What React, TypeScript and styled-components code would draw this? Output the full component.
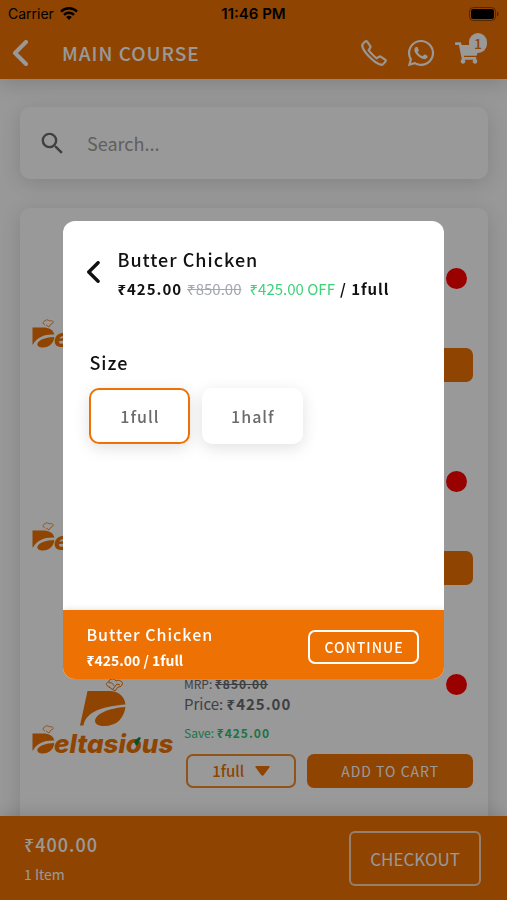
import React from "react";
import styled, { createGlobalStyle, css } from "styled-components";
import { FaShoppingCart, FaWhatsapp } from "react-icons/fa";
import { SlPhone } from "react-icons/sl";
import { MdSearch } from "react-icons/md";

const orange = "#ee7203";
const sans = '"Noto Sans CJK SC", "Noto Sans", sans-serif';

const GlobalStyle = createGlobalStyle`
  *, *::before, *::after { box-sizing: border-box; }
  body { margin: 0; font-family: ${sans}; color: #6b6b70; background: #fff; }
  button, input, select { font: inherit; color: inherit; }
  button { cursor: pointer; padding: 0; border: 0; background: none; }
  h1, h2, h3, p { margin: 0; font-weight: 500; }
`;

const Screen = styled.div`
  height: 100vh;
  display: flex;
  flex-direction: column;
  overflow: hidden;
  background: #fdfdfd;
`;

const TopBar = styled.header`
  flex: none;
  background: ${orange};
  box-shadow: 0 4px 20px rgba(0, 0, 0, 0.16);
  z-index: 1;
`;

const StatusBar = styled.div`
  display: grid;
  grid-template-columns: 1fr auto 1fr;
  align-items: center;
  height: 27px;
  padding: 0 8px;
  font: 400 14px/20px Inter, sans-serif;
  color: #000;
`;

const Carrier = styled.span`
  display: flex;
  align-items: center;
  gap: 6px;
`;

const Clock = styled.time`
  font-size: 15px;
  font-weight: 600;
`;

const BatterySlot = styled.span`
  display: flex;
  justify-content: flex-end;
`;

const NavBar = styled.nav`
  display: flex;
  align-items: center;
  height: 52px;
  padding: 0 20px 0 12px;
  color: #fff;
`;

const IconButton = styled.button`
  position: relative;
  display: flex;
  color: inherit;
`;

const NavTitle = styled.h1`
  flex: 1;
  margin-left: 34px;
  font-size: 19px;
  line-height: 28px;
  letter-spacing: 1px;
`;

const NavActions = styled.div`
  display: flex;
  align-items: center;
  gap: 19px;
`;

const PhoneIcon = styled(SlPhone)`
  stroke: currentColor;
  stroke-width: 28px;
`;

const CartButton = styled(IconButton)`
  padding-right: 8px;
`;

const CartBadge = styled.span`
  position: absolute;
  top: -8px;
  right: 0;
  width: 18px;
  height: 20px;
  border-radius: 9px;
  background: #fff;
  color: ${orange};
  font-size: 14px;
  font-weight: 500;
  line-height: 20px;
  text-align: center;
`;

const Content = styled.main`
  flex: 1;
  min-height: 0;
  overflow: hidden;
  display: flex;
  flex-direction: column;
  gap: 29px;
  padding: 28px 19px 0 20px;
`;

const panel = css`
  background: #fff;
  border-radius: 10px;
  box-shadow: 0 4px 20px rgba(0, 0, 0, 0.14);
`;

const SearchBox = styled.label`
  ${panel}
  flex: none;
  display: flex;
  align-items: center;
  gap: 20px;
  height: 72px;
  padding: 0 18px;
`;

const SearchInput = styled.input`
  flex: 1;
  min-width: 0;
  border: 0;
  padding: 0;
  outline: 0;
  background: none;
  font-size: 18px;
  line-height: 28px;
  &::placeholder {
    color: #a0a0a0;
    opacity: 1;
  }
`;

const ItemList = styled.ul`
  ${panel}
  flex: none;
  margin: 0;
  padding: 0 15px 40px 12px;
  list-style: none;
`;

const Item = styled.li`
  display: flex;
  align-items: flex-start;
  gap: 12px;
  padding: 60px 0 29px;
`;

const ItemInfo = styled.div`
  flex: 1;
  min-width: 0;
`;

const MrpRow = styled.div`
  display: flex;
  align-items: center;
  justify-content: space-between;
  height: 20px;
  padding-right: 6px;
  font-size: 12px;
  line-height: 20px;
`;

const Dot = styled.span`
  flex: none;
  width: 21px;
  height: 21px;
  border-radius: 50%;
  background: #ff0000;
`;

const Amount = styled.b<{ $struck?: boolean }>`
  font-weight: 700;
  text-decoration: ${(p) => (p.$struck ? "line-through" : "none")};
  letter-spacing: 1px;
`;

const PriceRow = styled.p`
  font-size: 15px;
  line-height: 20px;
  font-weight: 400;
`;

const SaveRow = styled.p`
  margin-top: 9px;
  font-size: 12px;
  line-height: 20px;
  font-weight: 400;
  color: #32c077;
`;

const ItemActions = styled.div`
  display: grid;
  grid-template-columns: 2fr 3fr;
  gap: 11px;
  margin-top: 11px;
  padding-left: 2px;
`;

const SizePicker = styled.label`
  display: flex;
  align-items: center;
  justify-content: center;
  gap: 6px;
  height: 34px;
  border: 2px solid #f08a2c;
  border-radius: 7px;
  color: ${orange};
`;

const SizeSelect = styled.select`
  appearance: none;
  border: 0;
  padding: 0;
  background: none;
  font-size: 15px;
  line-height: 24px;
  font-weight: 500;
`;

const AddButton = styled.button`
  height: 34px;
  border-radius: 7px;
  background: ${orange};
  color: #fff;
  font-size: 14px;
  line-height: 24px;
  letter-spacing: 1px;
`;

const CartFooter = styled.footer`
  flex: none;
  display: flex;
  align-items: center;
  justify-content: space-between;
  height: 84px;
  padding: 0 26px 0 24px;
  background: ${orange};
  box-shadow: 0 -2px 16px rgba(0, 0, 0, 0.14);
  color: #fff;
  z-index: 1;
`;

const CartTotal = styled.p`
  font-size: 18px;
  line-height: 28px;
  letter-spacing: 1px;
`;

const CartCount = styled.p`
  margin-top: 4px;
  font-size: 14px;
  line-height: 24px;
  font-weight: 400;
`;

const OutlineButton = styled.button<{ $large?: boolean }>`
  color: #fff;
  border: 2px solid ${(p) => (p.$large ? "#fad5b3" : "#fff")};
  border-radius: ${(p) => (p.$large ? "6px" : "7px")};
  height: ${(p) => (p.$large ? "55px" : "34px")};
  padding: ${(p) => (p.$large ? "0 19px" : "0 13px 0 14px")};
  font-size: ${(p) => (p.$large ? "17px" : "14px")};
  font-weight: ${(p) => (p.$large ? 400 : 500)};
  letter-spacing: ${(p) => (p.$large ? "0" : "1px")};
`;

const Overlay = styled.div`
  position: fixed;
  inset: 0;
  z-index: 2;
  display: grid;
  place-items: center;
  background: rgba(0, 0, 0, 0.4);
`;

const Dialog = styled.section`
  display: flex;
  flex-direction: column;
  width: 75%;
  min-height: 458px;
  overflow: hidden;
  border-radius: 12px;
  background: #fff;
  color: #111;
`;

const DialogHeader = styled.header`
  display: flex;
  align-items: center;
  gap: 17px;
  padding: 23px 23px 0;
`;

const BackButton = styled(IconButton)`
  padding-bottom: 5px;
`;

const DialogTitle = styled.h2`
  font-size: 18px;
  line-height: 30px;
  letter-spacing: 1px;
`;

const DialogPrice = styled.p`
  display: flex;
  gap: 5px;
  font-size: 15px;
  line-height: 30px;
`;

const CurrentPrice = styled.span`
  font-weight: 700;
  letter-spacing: 1px;
`;

const OldPrice = styled.s`
  color: #a3a7b0;
  font-weight: 400;
`;

const Discount = styled.span`
  margin-left: 3px;
  color: #3dd27a;
  font-weight: 400;
`;

const SizeGroup = styled.fieldset`
  flex: 1;
  min-width: 0;
  margin: 43px 0 0;
  padding: 0 26px;
  border: 0;
`;

const SizeLegend = styled.legend`
  padding: 0;
  font-size: 18px;
  line-height: 30px;
  font-weight: 500;
  letter-spacing: 1px;
`;

const SizeOptions = styled.div`
  display: flex;
  gap: 12px;
  margin-top: 11px;
`;

const SizeOption = styled.label`
  position: relative;
  display: flex;
  align-items: center;
  justify-content: center;
  width: 101px;
  height: 56px;
  border: 2px solid #fff;
  border-radius: 10px;
  background: #fff;
  box-shadow: 0 4px 16px rgba(0, 0, 0, 0.12);
  color: #6b6b6b;
  font-size: 16px;
  font-weight: 500;
  letter-spacing: 1px;
  cursor: pointer;
  &:has(input:checked) {
    border-color: ${orange};
  }
`;

const HiddenRadio = styled.input`
  position: absolute;
  inset: 0;
  margin: 0;
  opacity: 0;
`;

const DialogFooter = styled.footer`
  display: flex;
  align-items: center;
  justify-content: space-between;
  height: 69px;
  padding: 4px 25px 0 23px;
  background: ${orange};
  box-shadow: 0 -1px 6px rgba(0, 0, 0, 0.1);
  color: #fff;
`;

const FooterTitle = styled.h3`
  font-size: 16px;
  line-height: 26px;
  letter-spacing: 1px;
`;

const FooterPrice = styled.p`
  font-size: 14px;
  line-height: 26px;
  font-weight: 700;
`;

const BrandSvg = styled.svg`
  flex: none;
  overflow: visible;
`;

const BrandName = styled.text`
  font: italic 800 26px Inter, sans-serif;
  font-feature-settings: "cv11";
`;

function Chevron({ width, height }: { width: number; height: number }) {
  return (
    <svg width={width} height={height} viewBox="0 0 16 26" fill="none" stroke="currentColor" strokeWidth="4" strokeLinejoin="round" strokeLinecap="round" aria-hidden>
      <path d="M14 2 3 13l11 11" />
    </svg>
  );
}

function Wifi() {
  return (
    <svg width="18" height="13" viewBox="0 0 18 13" aria-hidden>
      <path d="M1 4.6a11.5 11.5 0 0 1 16 0" fill="none" stroke="#000" strokeWidth="2.5" />
      <path d="M4 7.8a7.2 7.2 0 0 1 10 0" fill="none" stroke="#000" strokeWidth="2.4" />
      <path d="M6.2 10.1a4.2 4.2 0 0 1 5.6 0L9 13z" />
    </svg>
  );
}

function Battery() {
  return (
    <svg width="30" height="14" viewBox="0 0 30 14" aria-hidden>
      <rect x="0.5" y="0.5" width="26" height="13" rx="4" fill="none" stroke="#000" strokeOpacity="0.4" />
      <rect x="2" y="2" width="23" height="10" rx="2.5" />
      <path d="M28 4.500c2 .8 2 4.200 0 5z" fillOpacity="0.45" />
    </svg>
  );
}

function Brand() {
  return (
    <BrandSvg width="140" height="84" viewBox="0 0 140 84" fill={orange} role="img" aria-label="Deltasious">
      <g fill="none" stroke={orange} strokeWidth="1">
        <path d="M78 13c-4 0-5-5-1-5 0-4 6-4 7-1 3-2 8 1 6 4-1 2-3 2-4 2l-3 4-6-4" />
        <path d="M77 9c3-1 4 1 5 3M81 15l4-5 3 1" />
        <path d="M13 57c-3-1-2-4 0-4 1-2 4-1 4 0 2-1 5 0 4 2-1 1-2 1-2 1l-2 3-3-2" strokeWidth="0.8" />
      </g>
      <path d="M55.500 17H77c10 0 16 6 16.400 13.500C75 32 54 36 51.500 51.500H48z" />
      <path d="M93.400 33C92 44 85 52 72 52c-5 0-9-2-9-5 0-7 14-13 30.400-14z" />
      <path d="M.5 59.500H11c6 0 10.500 2.500 11.300 7C13 66 5 69 1 76.500H.5z" />
      <path d="M22.300 69c-.5 6-5 10.500-11.500 10.500-3 0-5.500-1-5.500-3.500C6 72 14 69 22.300 69z" />
      <BrandName x="22" y="79">eltasious</BrandName>
      <path d="M102 68c1-2 2-3 3-3 1-2 3-2 4-1l-2 3c0 2-1 4-3 5 0-1-1-2-2-4z" fill="#0c8a43" />
    </BrandSvg>
  );
}

interface MenuItem {
  id: number;
  mrp: string;
  price: string;
  save: string;
}

const items: MenuItem[] = [1, 2, 3].map((id) => ({
  id,
  mrp: "₹850.00",
  price: "₹425.00",
  save: "₹425.00",
}));

const sizes = ["1full", "1half"];

function ItemRow({ item }: { item: MenuItem }) {
  return (
    <Item>
      <Brand />
      <ItemInfo>
        <MrpRow>
          <span>
            MRP: <Amount $struck>{item.mrp}</Amount>
          </span>
          <Dot />
        </MrpRow>
        <PriceRow>
          Price: <Amount>{item.price}</Amount>
        </PriceRow>
        <SaveRow>
          Save: <Amount>{item.save}</Amount>
        </SaveRow>
        <ItemActions>
          <SizePicker>
            <SizeSelect aria-label="Size" defaultValue="1full">
              {sizes.map((s) => (
                <option key={s}>{s}</option>
              ))}
            </SizeSelect>
            <svg width="15" height="10" viewBox="0 0 15 10" fill={orange} aria-hidden>
              <path d="M1.500 0h12q2 0 .8 1.600L8.800 9q-1.300 1.400-2.600 0L.7 1.600Q-.5 0 1.500 0z" />
            </svg>
          </SizePicker>
          <AddButton>ADD TO CART</AddButton>
        </ItemActions>
      </ItemInfo>
    </Item>
  );
}

export default function App() {
  return (
    <>
      <GlobalStyle />
      <Screen>
        <TopBar>
          <StatusBar>
            <Carrier>
              Carrier <Wifi />
            </Carrier>
            <Clock>11:46 PM</Clock>
            <BatterySlot>
              <Battery />
            </BatterySlot>
          </StatusBar>
          <NavBar>
            <IconButton aria-label="Back">
              <Chevron width={16} height={26} />
            </IconButton>
            <NavTitle>MAIN COURSE</NavTitle>
            <NavActions>
              <IconButton aria-label="Call">
                <PhoneIcon size={26} />
              </IconButton>
              <IconButton aria-label="WhatsApp">
                <FaWhatsapp size={30} />
              </IconButton>
              <CartButton aria-label="Cart">
                <FaShoppingCart size={24} />
                <CartBadge>1</CartBadge>
              </CartButton>
            </NavActions>
          </NavBar>
        </TopBar>
        <Content>
          <SearchBox>
            <MdSearch size={29} aria-hidden />
            <SearchInput type="search" placeholder="Search..." aria-label="Search" />
          </SearchBox>
          <ItemList>
            {items.map((item) => (
              <ItemRow key={item.id} item={item} />
            ))}
          </ItemList>
        </Content>
        <CartFooter>
          <div>
            <CartTotal>₹400.00</CartTotal>
            <CartCount>1 Item</CartCount>
          </div>
          <OutlineButton $large>CHECKOUT</OutlineButton>
        </CartFooter>
      </Screen>
      <Overlay>
        <Dialog role="dialog" aria-modal="true" aria-labelledby="dish-name">
          <DialogHeader>
            <BackButton aria-label="Close">
              <Chevron width={14} height={22} />
            </BackButton>
            <div>
              <DialogTitle id="dish-name">Butter Chicken</DialogTitle>
              <DialogPrice>
                <CurrentPrice>₹425.00</CurrentPrice>
                <OldPrice>₹850.00</OldPrice>
                <Discount>₹425.00 OFF</Discount>
                <CurrentPrice>/ 1full</CurrentPrice>
              </DialogPrice>
            </div>
          </DialogHeader>
          <SizeGroup>
            <SizeLegend>Size</SizeLegend>
            <SizeOptions>
              {sizes.map((s, i) => (
                <SizeOption key={s}>
                  <HiddenRadio type="radio" name="size" value={s} defaultChecked={i === 0} />
                  {s}
                </SizeOption>
              ))}
            </SizeOptions>
          </SizeGroup>
          <DialogFooter>
            <div>
              <FooterTitle>Butter Chicken</FooterTitle>
              <FooterPrice>₹425.00 / 1full</FooterPrice>
            </div>
            <OutlineButton>CONTINUE</OutlineButton>
          </DialogFooter>
        </Dialog>
      </Overlay>
    </>
  );
}
